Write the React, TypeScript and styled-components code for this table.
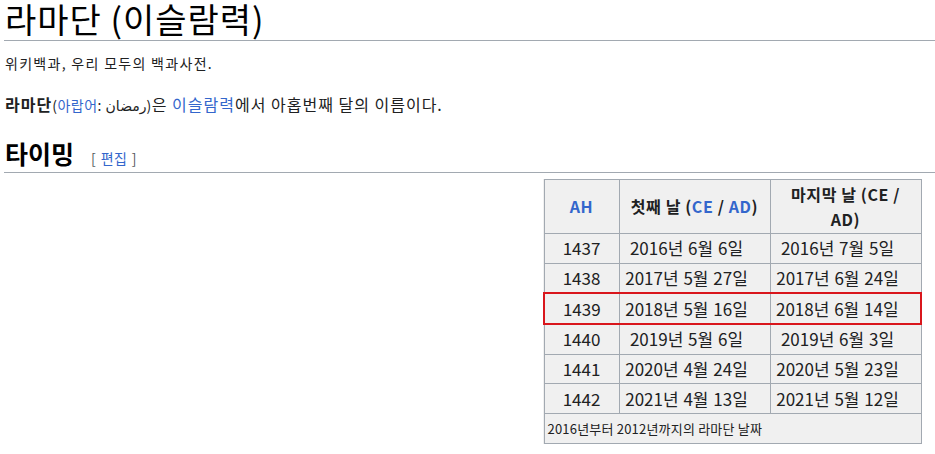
import React from "react";
import styled, { createGlobalStyle } from "styled-components";

const Global = createGlobalStyle`
  html, body { margin: 0; padding: 0; background: #fff; }
  body { font-family: "Noto Sans CJK KR", "DejaVu Sans", sans-serif; color: #202122; }
`;

const Page = styled.div`
  padding: 0 0 0 4px;
  width: 931px;
`;

const Title = styled.h1`
  margin: -3px 0 0 0;
  padding: 0 0 0 1px;
  font-size: 34px;
  font-weight: 400;
  letter-spacing: 1px;
  line-height: 43px;
  color: #000;
  border-bottom: 1px solid #a2a9b1;
`;

const Tagline = styled.div`
  margin: 12px 0 0 1px;
  font-size: 14px;
  letter-spacing: 1.3px;
  line-height: 20px;
  color: #202122;
`;

const Lead = styled.p`
  margin: 20px 0 0 1px;
  font-size: 16px;
  letter-spacing: 1px;
  line-height: 22px;
`;

const Link = styled.a`
  color: #3366cc;
  text-decoration: none;
`;

const Small = styled.span`
  font-size: 14px;
  letter-spacing: 0.5px;
`;

const SectionHead = styled.h2`
  margin: 21px 0 0 0;
  padding: 2px 0 0 1px;
  display: flex;
  align-items: baseline;
  gap: 17px;
  font-size: 25px;
  font-weight: 700;
  line-height: 28px;
  color: #000;
  border-bottom: 1px solid #a2a9b1;
`;

const EditLink = styled.span`
  font-size: 14px;
  font-weight: 400;
  color: #54595d;
  letter-spacing: 0.4px;
  word-spacing: 1px;
`;

const Float = styled.div`
  display: flex;
  justify-content: flex-end;
  padding: 6px 13px 0 0;
`;

const Table = styled.table`
  border-collapse: collapse;
  table-layout: fixed;
  width: 377px;
  background: #f0f0f0;
  color: #202122;
`;

const Th = styled.th<{ $w: number }>`
  box-sizing: border-box;
  width: ${(p) => p.$w}px;
  height: 54px;
  padding: 0 4px;
  border: 1px solid #a2a9b1;
  font-size: 16px;
  letter-spacing: 0.6px;
  font-weight: 700;
  line-height: 25px;
  text-align: center;
`;

const Td = styled.td<{ $hl?: boolean; $pos: "l" | "m" | "r" }>`
  height: 28.7px;
  padding: ${(p) => (p.$pos === "l" ? "0 1px" : "0 18px 0 2px")};
  border: 1px solid #a2a9b1;
  text-align: center;
  font-size: 17px;
  word-spacing: 1px;
  line-height: 22px;
  white-space: nowrap;
  ${(p) =>
    p.$hl
      ? `border-top: 2px solid #d9161c; border-bottom: 2px solid #d9161c;
         ${p.$pos === "l" ? "border-left: 2px solid #d9161c;" : ""}
         ${p.$pos === "r" ? "border-right: 2px solid #d9161c;" : ""}`
      : ""}
`;

const Caption = styled.td`
  height: 28.7px;
  padding: 0 3px;
  border: 1px solid #a2a9b1;
  font-size: 13px;
  letter-spacing: 0.2px;
  text-align: left;
`;

const rows = [
  ["1437", "2016년 6월 6일", "2016년 7월 5일"],
  ["1438", "2017년 5월 27일", "2017년 6월 24일"],
  ["1439", "2018년 5월 16일", "2018년 6월 14일"],
  ["1440", "2019년 5월 6일", "2019년 6월 3일"],
  ["1441", "2020년 4월 24일", "2020년 5월 23일"],
  ["1442", "2021년 4월 13일", "2021년 5월 12일"],
];

export default function App() {
  return (
    <Page>
      <Global />
      <Title>라마단 (이슬람력)</Title>
      <Tagline>위키백과, 우리 모두의 백과사전.</Tagline>
      <Lead>
        <b>라마단</b>
        <Small>
          (<Link>아랍어</Link>: <span lang="ar">رمضان</span>)
        </Small>
        은 <Link>이슬람력</Link>에서 아홉번째 달의 이름이다.
      </Lead>
      <SectionHead>
        타이밍
        <EditLink>
          [ <Link>편집</Link> ]
        </EditLink>
      </SectionHead>
      <Float>
        <Table>
          <thead>
            <tr>
              <Th $w={75}>
                <Link>AH</Link>
              </Th>
              <Th $w={151}>
                첫째 날 (<Link>CE</Link> / <Link>AD</Link>)
              </Th>
              <Th $w={151}>마지막 날 (CE / AD)</Th>
            </tr>
          </thead>
          <tbody>
            {rows.map((r) => {
              const hl = r[0] === "1439";
              return (
                <tr key={r[0]}>
                  <Td $hl={hl} $pos="l">{r[0]}</Td>
                  <Td $hl={hl} $pos="m">{r[1]}</Td>
                  <Td $hl={hl} $pos="r">{r[2]}</Td>
                </tr>
              );
            })}
            <tr>
              <Caption colSpan={3}>2016년부터 2012년까지의 라마단 날짜</Caption>
            </tr>
          </tbody>
        </Table>
      </Float>
    </Page>
  );
}
